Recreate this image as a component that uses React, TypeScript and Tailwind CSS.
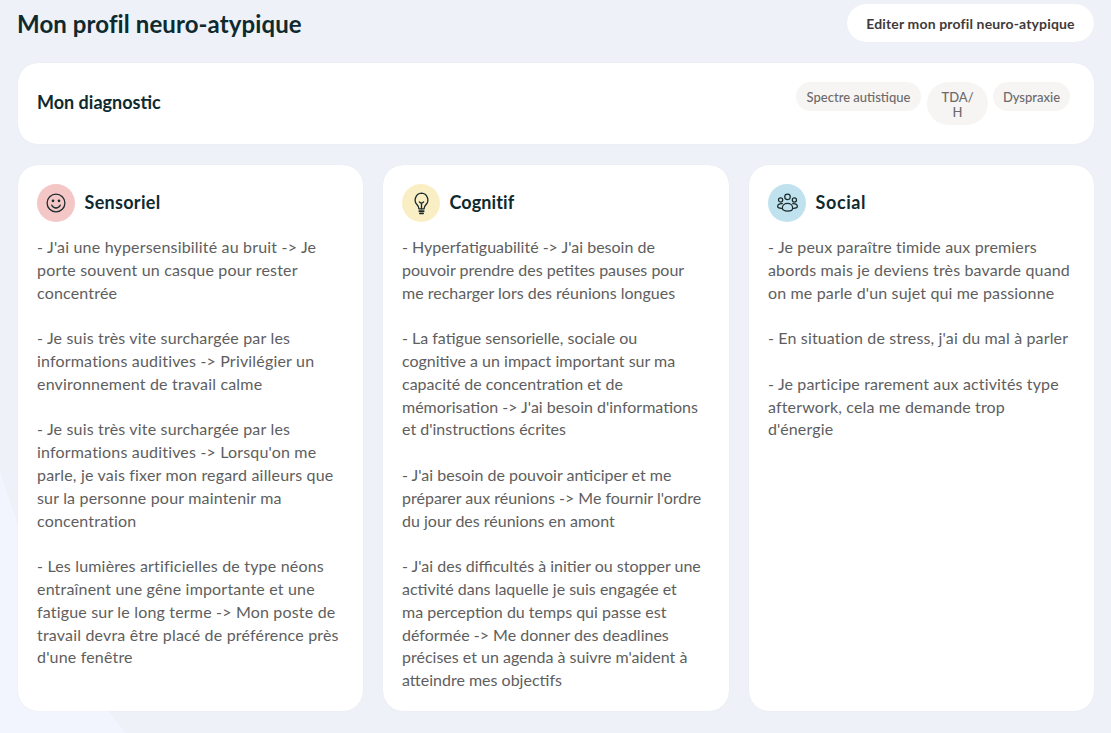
import React from "react";

const dark = "text-[#0f2a2f]";

function Smile() {
  return (
    <svg width="24" height="24" viewBox="0 0 24 24" fill="none" stroke="#1b2b2e" strokeWidth="1.3" strokeLinecap="round" strokeLinejoin="round">
      <circle cx="12" cy="12" r="8.9" />
      <path d="M7.8 14.2c1 1.9 2.5 2.8 4.2 2.8s3.2-.9 4.2-2.8" />
      <circle cx="9" cy="9.8" r=".7" fill="#1b2b2e" />
      <circle cx="15" cy="9.8" r=".7" fill="#1b2b2e" />
    </svg>
  );
}

function Bulb() {
  return (
    <svg width="25" height="25" viewBox="0 0 24 24" fill="none" stroke="#1b2b2e" strokeWidth="1.3" strokeLinecap="round" strokeLinejoin="round">
      <path d="M9.6 17.2c0-2-.8-2.9-2-4.2A6.6 6.6 0 0 1 12 2a6.6 6.6 0 0 1 4.4 11c-1.2 1.3-2 2.2-2 4.2z" />
      <path d="M12 17v-5.5M10 10.5l2 1.5 2-1.5" />
      <path d="M9.8 19.3h4.4M10.4 21.4h3.2" strokeWidth="1.6" />
    </svg>
  );
}

function Team() {
  return (
    <svg width="23" height="24" viewBox="0 0 24 24" fill="none" stroke="#1b2b2e" strokeWidth="1.3" strokeLinecap="round" strokeLinejoin="round">
      <circle cx="12" cy="5.6" r="2.9" />
      <circle cx="4.8" cy="8.8" r="2.2" />
      <circle cx="19.2" cy="8.8" r="2.2" />
      <path d="M6.6 17.4c0-3 2.4-5 5.4-5s5.4 2 5.4 5c0 1.8-2.4 3-5.4 3s-5.4-1.2-5.4-3z" />
      <path d="M6.6 12.6c-2.6-.3-4.9.9-4.9 2.9 0 1.3 1.6 2.1 4 2.2M17.4 12.6c2.6-.3 4.9.9 4.9 2.9 0 1.3-1.6 2.1-4 2.2" />
    </svg>
  );
}

const columns = [
  {
    title: "Sensoriel",
    bg: "bg-[#f4c6c6]",
    icon: <Smile />,
    tracking: "tracking-[0.3px]",
    body: "tracking-[0.18px]",
    text: `- J'ai une hypersensibilité au bruit -> Je
porte souvent un casque pour rester
concentrée

- Je suis très vite surchargée par les
informations auditives -> Privilégier un
environnement de travail calme

- Je suis très vite surchargée par les
informations auditives -> Lorsqu'on me
parle, je vais fixer mon regard ailleurs que
sur la personne pour maintenir ma
concentration

- Les lumières artificielles de type néons
entraînent une gêne importante et une
fatigue sur le long terme -> Mon poste de
travail devra être placé de préférence près
d'une fenêtre`,
  },
  {
    title: "Cognitif",
    bg: "bg-[#faefc4]",
    icon: <Bulb />,
    tracking: "tracking-[0.1px]",
    body: "tracking-[0px]",
    text: `- Hyperfatiguabilité -> J'ai besoin de
pouvoir prendre des petites pauses pour
me recharger lors des réunions longues

- La fatigue sensorielle, sociale ou
cognitive a un impact important sur ma
capacité de concentration et de
mémorisation -> J'ai besoin d'informations
et d'instructions écrites

- J'ai besoin de pouvoir anticiper et me
préparer aux réunions -> Me fournir l'ordre
du jour des réunions en amont

- J'ai des difficultés à initier ou stopper une
activité dans laquelle je suis engagée et
ma perception du temps qui passe est
déformée -> Me donner des deadlines
précises et un agenda à suivre m'aident à
atteindre mes objectifs`,
  },
  {
    title: "Social",
    bg: "bg-[#bfe2ee]",
    icon: <Team />,
    tracking: "tracking-[0.6px]",
    body: "tracking-[0.15px]",
    text: `- Je peux paraître timide aux premiers
abords mais je deviens très bavarde quand
on me parle d'un sujet qui me passionne

- En situation de stress, j'ai du mal à parler

- Je participe rarement aux activités type
afterwork, cela me demande trop
d'énergie`,
  },
];

export default function App() {
  return (
    <div className="relative w-[1111px] h-[733px] overflow-hidden bg-[#eef1f8] pl-[18px] pr-[17px] font-['Lato',sans-serif]">
      <div className="absolute left-0 top-[472px] h-[261px] w-[125px] bg-[#f2f5fd] [clip-path:polygon(0_0,14.4%_20.3%,86.4%_91.2%,100%_100%,0_100%)]" />

      <div className="relative flex h-[63px] items-start justify-between pt-[4px]">
        <h1 className={`-ml-[1px] text-[24px] leading-[40px] font-bold tracking-[0.1px] ${dark}`}>Mon profil neuro-atypique</h1>
        <button className="h-[38px] w-[247px] rounded-full bg-white text-[14px] font-bold tracking-[0.15px] text-[#3f3a3a] shadow-[0_0_1px_rgba(0,0,0,0.05)]">
          Editer mon profil neuro-atypique
        </button>
      </div>

      <section className="relative flex h-[81px] justify-between rounded-[20px] bg-white pt-[19px] pr-[24px] pl-[19px] shadow-[0_0_1px_rgba(0,0,0,0.1)]">
        <h2 className={`text-[18px] leading-[40px] font-bold ${dark}`}>Mon diagnostic</h2>
        <div className="flex items-start">
          <span className="mr-[6px] h-[29px] w-[125px] rounded-[15px] bg-[#f7f5f4] text-center text-[13px] leading-[30px] font-medium text-[#6d6a6a]">Spectre autistique</span>
          <span className="mr-[5px] h-[43px] w-[61px] rounded-[22px] bg-[#f7f5f4] pt-[8px] text-center text-[13px] leading-[14.5px] font-medium text-[#6d6a6a]">TDA/<br />H</span>
          <span className="h-[29px] w-[77px] rounded-[15px] bg-[#f7f5f4] text-center text-[13px] leading-[30px] font-medium text-[#6d6a6a]">Dyspraxie</span>
        </div>
      </section>

      <div className="relative mt-[21px] grid h-[546px] grid-cols-[344.5px_345.5px_345px] gap-[20.5px]">
        {columns.map((c) => (
          <article key={c.title} className="rounded-[20px] bg-white pt-[19px] pl-[19px] shadow-[0_0_1px_rgba(0,0,0,0.1)]">
            <div className="flex items-center gap-[9.5px]">
              <div className={`flex h-[38px] w-[38px] items-center justify-center rounded-full ${c.bg}`}>{c.icon}</div>
              <h3 className={`-mt-[2px] text-[18px] font-bold ${c.tracking} ${dark}`}>{c.title}</h3>
            </div>
            <p className={`mt-[14px] whitespace-pre text-[16px] leading-[22.8px] ${c.body} text-[#5e5e5e]`}>{c.text}</p>
          </article>
        ))}
      </div>
    </div>
  );
}
